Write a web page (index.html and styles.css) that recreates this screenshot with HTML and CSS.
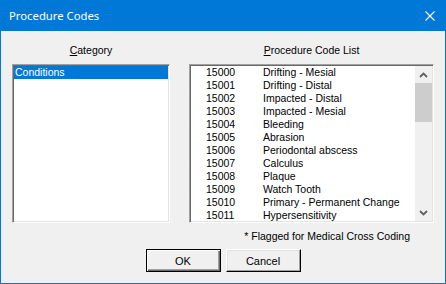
FILE: index.html
```html
<!DOCTYPE html>
<html lang="en">
<head>
    <meta charset="UTF-8">
    <title>Procedure Codes</title>
    <link rel="stylesheet" href="styles.css">
</head>
<body>
    <div class="window">
        <div class="titlebar">
            <span class="title">Procedure Codes</span>
            <svg class="close" width="10" height="10" viewBox="0 0 10 10">
                <path d="M0.5 0.5 L9.5 9.5 M9.5 0.5 L0.5 9.5" stroke="#fff" stroke-width="1.1" fill="none"/>
            </svg>
        </div>
        <div class="content">
            <div class="columns">
                <div class="col col-cat">
                    <div class="label"><u>C</u>ategory</div>
                    <div class="listbox">
                        <div class="row selected">Conditions</div>
                    </div>
                </div>
                <div class="col col-proc">
                    <div class="label"><u>P</u>rocedure Code List</div>
                    <div class="listbox proc-list">
                        <div class="rows">
                            <div class="code-row"><span>15000</span><span>Drifting - Mesial</span></div>
                            <div class="code-row"><span>15001</span><span>Drifting - Distal</span></div>
                            <div class="code-row"><span>15002</span><span>Impacted - Distal</span></div>
                            <div class="code-row"><span>15003</span><span>Impacted - Mesial</span></div>
                            <div class="code-row"><span>15004</span><span>Bleeding</span></div>
                            <div class="code-row"><span>15005</span><span>Abrasion</span></div>
                            <div class="code-row"><span>15006</span><span>Periodontal abscess</span></div>
                            <div class="code-row"><span>15007</span><span>Calculus</span></div>
                            <div class="code-row"><span>15008</span><span>Plaque</span></div>
                            <div class="code-row"><span>15009</span><span>Watch Tooth</span></div>
                            <div class="code-row"><span>15010</span><span>Primary - Permanent Change</span></div>
                            <div class="code-row"><span>15011</span><span>Hypersensitivity</span></div>
                        </div>
                        <div class="scrollbar">
                            <div class="arrow">
                                <svg width="9" height="6" viewBox="0 0 9 6"><polyline points="1,5 4.5,1.5 8,5" stroke="#606060" stroke-width="1.8" fill="none"/></svg>
                            </div>
                            <div class="thumb"></div>
                            <div class="track"></div>
                            <div class="arrow">
                                <svg width="9" height="6" viewBox="0 0 9 6"><polyline points="1,1 4.5,4.5 8,1" stroke="#606060" stroke-width="1.8" fill="none"/></svg>
                            </div>
                        </div>
                    </div>
                </div>
            </div>
            <div class="note">* Flagged for Medical Cross Coding</div>
            <div class="buttons">
                <button class="button default">OK</button>
                <button class="button">Cancel</button>
            </div>
        </div>
    </div>
</body>
</html>
```

FILE: styles.css
```css
body {
    margin: 0;
    font-family: "Liberation Sans", Arial, sans-serif;
    font-size: 10.5px;
    color: #000;
}

.window {
    width: 446px;
    height: 284px;
    box-sizing: border-box;
    border: 1px solid #0078d7;
    border-top: none;
    background-color: #f0f0f0;
}

.titlebar {
    height: 31px;
    background-color: #0078d7;
    display: flex;
    align-items: center;
    padding-left: 8px;
}

.title {
    font-family: "Noto Sans", sans-serif;
    font-size: 11.3px;
    color: white;
}

.close {
    margin-left: auto;
    margin-right: 10px;
}

.content {
    padding: 13px 11px 0 11px;
}

.columns {
    display: flex;
    gap: 19px;
}

.col-cat {
    width: 158px;
}

.col-proc {
    width: 245px;
}

.label {
    height: 13px;
    line-height: 13px;
    text-align: center;
    margin-bottom: 7px;
}

.listbox {
    height: 159px;
    box-sizing: border-box;
    background-color: white;
    border: 1px solid;
    border-color: #a0a0a0 #fff #fff #a0a0a0;
    box-shadow: inset 1px 1px #696969, inset -1px -1px #e3e3e3;
    padding: 1px;
}

.row {
    height: 13px;
    line-height: 13px;
    padding-left: 1px;
}

.selected {
    background-color: #0078d7;
    color: white;
}

.proc-list {
    display: flex;
}

.rows {
    flex: 1;
}

.code-row {
    display: grid;
    grid-template-columns: 57px 1fr;
    height: 13px;
    line-height: 13px;
    padding-left: 15px;
    white-space: nowrap;
}

.scrollbar {
    width: 17px;
    display: flex;
    flex-direction: column;
    background-color: #f0f0f0;
}

.arrow {
    height: 17px;
    display: flex;
    justify-content: center;
    align-items: center;
}

.thumb {
    height: 39px;
    background-color: #cdcdcd;
}

.track {
    flex: 1;
}

.note {
    margin-top: 7px;
    height: 13px;
    line-height: 13px;
    text-align: right;
    margin-right: 24px;
}

.buttons {
    margin-top: 6px;
    display: flex;
    justify-content: center;
    gap: 5px;
}

.button {
    width: 75px;
    height: 23px;
    padding: 0;
    font-family: "Liberation Sans", Arial, sans-serif;
    font-size: 11px;
    color: #000;
    background-color: #f0f0f0;
    border: 1px solid;
    border-color: #fff #000 #000 #fff;
    box-shadow: inset -1px -1px #a0a0a0, inset 1px 1px #e3e3e3;
}

.default {
    border-color: #000;
    box-shadow: inset 1px 1px #fff, inset -1px -1px #696969, inset -2px -2px #a0a0a0;
}
```
